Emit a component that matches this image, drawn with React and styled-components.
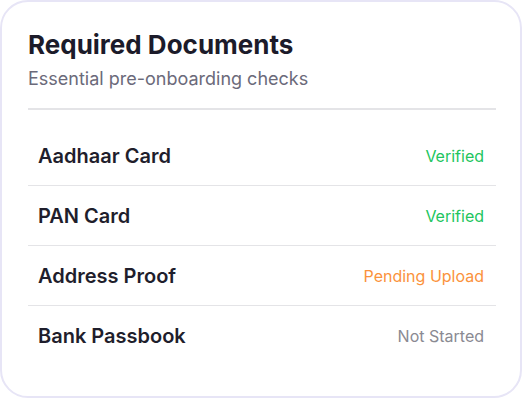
import React from 'react'
import styled, { createGlobalStyle } from 'styled-components'

const GlobalStyle = createGlobalStyle`
  body {
    margin: 0;
    background: #ffffff;
    font-family: Inter, "Noto Sans", sans-serif;
  }
`

const Card = styled.div`
  box-sizing: border-box;
  width: 522px;
  height: 398px;
  border: 2px solid #e7e5f6;
  border-radius: 28px;
  background: #ffffff;
  padding: 27px 24px 0 26px;
`

const Header = styled.div`
  padding-bottom: 17px;
  border-bottom: 2px solid #e4e4e7;
`

const Title = styled.h2`
  margin: 0;
  font-size: 26px;
  line-height: 32px;
  font-weight: 700;
  color: #1c1b2a;
`

const Subtitle = styled.p`
  margin: 6px 0 0;
  font-size: 18px;
  line-height: 24px;
  color: #6b6a7a;
`

const List = styled.div`
  margin-top: 15px;
`

const Row = styled.div`
  box-sizing: border-box;
  display: flex;
  align-items: center;
  justify-content: space-between;
  height: 60px;
  padding: 0 12px 0 10px;
  border-top: 1px solid ${p => (p.first ? 'transparent' : '#e4e4e7')};
`

const Label = styled.span`
  font-size: 20px;
  font-weight: 600;
  color: #1f1e2c;
`

const Status = styled.span`
  font-size: 16px;
  color: ${p => p.color};
`

const docs = [
  { name: 'Aadhaar Card', status: 'Verified', color: '#22c55e' },
  { name: 'PAN Card', status: 'Verified', color: '#22c55e' },
  { name: 'Address Proof', status: 'Pending Upload', color: '#fb923c' },
  { name: 'Bank Passbook', status: 'Not Started', color: '#8a8a92' },
]

const App = () => {
  return (
    <>
      <GlobalStyle />
      <Card>
        <Header>
          <Title>Required Documents</Title>
          <Subtitle>Essential pre-onboarding checks</Subtitle>
        </Header>
        <List>
          {docs.map((d, i) => (
            <Row key={d.name} first={i === 0}>
              <Label>{d.name}</Label>
              <Status color={d.color}>{d.status}</Status>
            </Row>
          ))}
        </List>
      </Card>
    </>
  )
}

export default App
